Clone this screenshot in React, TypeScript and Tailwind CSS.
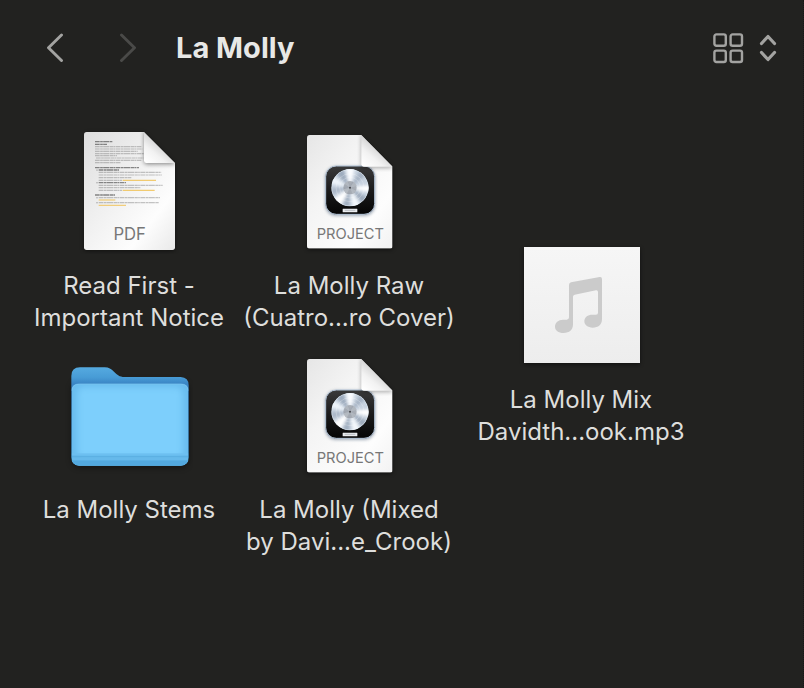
import type { ReactNode } from 'react';

interface FileItem {
  name: string[];
  icon: ReactNode;
}

// start offset, length and colour of each line of the document preview
const previewLines = [
  { x: 75, y: 65, w: 52, bold: true },
  { x: 75, y: 73, w: 36, bold: true },
  { x: 75, y: 80, w: 140 },
  { x: 75, y: 87, w: 142 },
  { x: 75, y: 94, w: 128 },
  { x: 75, y: 101, w: 146 },
  { x: 75, y: 107, w: 66 },
  { x: 78, y: 114, w: 142 },
  { x: 75, y: 121, w: 140 },
  { x: 75, y: 128, w: 78 },
  { x: 75, y: 143, w: 132, bold: true },
  { x: 86, y: 150, w: 62, bold: true },
  { x: 86, y: 157, w: 188 },
  { x: 86, y: 165, w: 190 },
  { x: 86, y: 173, w: 98 },
  { x: 86, y: 181, w: 70 },
  { x: 158, y: 181, w: 100, link: true },
  { x: 86, y: 188, w: 82, bold: true },
  { x: 86, y: 196, w: 192 },
  { x: 86, y: 203, w: 126 },
  { x: 86, y: 211, w: 70 },
  { x: 158, y: 211, w: 96, link: true },
  { x: 75, y: 225, w: 60, bold: true },
  { x: 86, y: 233, w: 184 },
  { x: 86, y: 240, w: 50, link: true },
  { x: 86, y: 248, w: 180 },
  { x: 86, y: 256, w: 82, link: true },
];

function PdfIcon() {
  return (
    <svg viewBox="-15 18 384 384" className="h-32 w-32" aria-hidden="true">
      <defs>
        <linearGradient id="pdf-page" x1="0" y1="0" x2="1" y2="1">
          <stop offset="0" stopColor="#dedede" />
          <stop offset="0.45" stopColor="#f1f1f1" />
          <stop offset="0.75" stopColor="#fdfdfd" />
          <stop offset="1" stopColor="#e9e9e9" />
        </linearGradient>
        <linearGradient id="pdf-fold" x1="0.1" y1="1" x2="0.6" y2="0.4">
          <stop offset="0" stopColor="#ffffff" />
          <stop offset="0.5" stopColor="#f2f2f2" />
          <stop offset="1" stopColor="#cfcfcf" />
        </linearGradient>
        <clipPath id="pdf-clip">
          <path d="M50 36H222L315 129V382Q315 390 307 390H50Q42 390 42 382V44Q42 36 50 36Z" />
        </clipPath>
        <filter id="pdf-blur" x="-30%" y="-30%" width="160%" height="160%">
          <feGaussianBlur stdDeviation="7" />
        </filter>
      </defs>
      <path d="M50 40H222L315 133V384Q315 393 307 393H50Q42 393 42 384Z" fill="#000" opacity="0.5" filter="url(#pdf-blur)" />
      <g clipPath="url(#pdf-clip)">
        <rect x="42" y="36" width="273" height="354" fill="url(#pdf-page)" />
        {previewLines.map((line) => (
          <line
            key={`${line.x}-${line.y}`}
            x1={line.x}
            x2={line.x + line.w}
            y1={line.y}
            y2={line.y}
            stroke={line.link ? '#f0bd45' : line.bold ? '#4c4c4c' : '#808080'}
            strokeWidth={line.bold ? 4 : 3.5}
            strokeDasharray={line.link ? undefined : '14 1.500 8 1 19 1.500 10 1 5 1.500'}
            opacity={line.link ? 0.75 : line.bold ? 0.65 : 0.45}
          />
        ))}
        <circle cx="81" cy="150" r="1.5" fill="#555" />
        <circle cx="81" cy="188" r="1.5" fill="#555" />
        <circle cx="81" cy="233" r="1.5" fill="#555" />
        <circle cx="81" cy="248" r="1.5" fill="#555" />
        <path d="M222 30V122Q222 133 233 133H318Z" fill="#000" opacity="0.45" filter="url(#pdf-blur)" />
        <path d="M222 36V122Q222 129 229 129H315Z" fill="url(#pdf-fold)" />
      </g>
      <text x="179" y="360" textAnchor="middle" fontSize="50" fill="#777777">PDF</text>
    </svg>
  );
}

const wedges = [
  { from: -8, to: 14, fill: '#ffffff' },
  { from: 30, to: 52, fill: '#9eabbc' },
  { from: 60, to: 82, fill: '#f4f8fc' },
  { from: 92, to: 112, fill: '#a3b0c1' },
  { from: 118, to: 146, fill: '#ffffff' },
  { from: 158, to: 180, fill: '#acb8c8' },
  { from: 192, to: 214, fill: '#eef4fa' },
  { from: 226, to: 250, fill: '#9eacbe' },
  { from: 258, to: 284, fill: '#fafcff' },
  { from: 300, to: 322, fill: '#a6b3c4' },
];

function wedgePath(from: number, to: number) {
  const point = (deg: number) => {
    const rad = (deg * Math.PI) / 180;
    return `${180 + 70 * Math.cos(rad)} ${203 + 70 * Math.sin(rad)}`;
  };
  return `M180 203L${point(from)}L${point(to)}Z`;
}

function ProjectIcon({ id }: { id: string }) {
  return (
    <svg viewBox="-15 18 384 384" className="h-32 w-32" aria-hidden="true">
      <defs>
        <linearGradient id={`${id}-page`} x1="0" y1="0" x2="1" y2="1">
          <stop offset="0" stopColor="#e6e6e6" />
          <stop offset="0.35" stopColor="#f4f4f4" />
          <stop offset="0.75" stopColor="#fdfdfd" />
          <stop offset="1" stopColor="#f2f2f2" />
        </linearGradient>
        <linearGradient id={`${id}-fold`} x1="0.1" y1="1" x2="0.6" y2="0.4">
          <stop offset="0" stopColor="#ffffff" />
          <stop offset="0.5" stopColor="#f2f2f2" />
          <stop offset="1" stopColor="#cfcfcf" />
        </linearGradient>
        <linearGradient id={`${id}-case`} x1="0" y1="0" x2="0" y2="1">
          <stop offset="0" stopColor="#3a3a3b" />
          <stop offset="0.5" stopColor="#1b1b1c" />
          <stop offset="1" stopColor="#050505" />
        </linearGradient>
        <clipPath id={`${id}-clip`}>
          <path d="M59 45H214L308 140V378Q308 386 300 386H59Q51 386 51 378V53Q51 45 59 45Z" />
        </clipPath>
        <clipPath id={`${id}-disc`}>
          <circle cx="180" cy="203" r="56" />
        </clipPath>
        <filter id={`${id}-blur`} x="-30%" y="-30%" width="160%" height="160%">
          <feGaussianBlur stdDeviation="7" />
        </filter>
        <filter id={`${id}-soft`} x="-30%" y="-30%" width="160%" height="160%">
          <feGaussianBlur stdDeviation="4" />
        </filter>
      </defs>
      <path d="M59 50H214L308 144V380Q308 389 300 389H59Q51 389 51 380Z" fill="#000" opacity="0.5" filter={`url(#${id}-blur)`} />
      <g clipPath={`url(#${id}-clip)`}>
        <rect x="51" y="45" width="257" height="341" fill={`url(#${id}-page)`} />
        <rect x="105" y="139" width="151" height="149" rx="34" fill="#6f7f93" opacity="0.6" filter={`url(#${id}-soft)`} />
        <rect x="107" y="138" width="147" height="145" rx="32" fill={`url(#${id}-case)`} stroke="#b4c5d8" strokeWidth="3" />
        <g clipPath={`url(#${id}-disc)`}>
          <circle cx="180" cy="203" r="56" fill="#c8d3e0" />
          <g filter={`url(#${id}-soft)`}>
            {wedges.map((wedge) => (
              <path key={wedge.from} d={wedgePath(wedge.from, wedge.to)} fill={wedge.fill} />
            ))}
          </g>
          <circle cx="180" cy="203" r="42" fill="none" stroke="#fff" strokeWidth="2" opacity="0.35" />
          <circle cx="180" cy="203" r="31" fill="none" stroke="#fff" strokeWidth="2" opacity="0.35" />
          <circle cx="180" cy="203" r="20" fill="#858b93" opacity="0.6" />
          <path d="M180 203L163 191L173 183ZM180 203L192 184L201 198ZM180 203L199 212L188 223ZM180 203L169 223L160 208Z" fill="#b9bfc6" opacity="0.7" />
          <circle cx="180" cy="203" r="3" fill="#44474b" />
          <circle cx="180" cy="203" r="55" fill="none" stroke="#e9f1f9" strokeWidth="2" opacity="0.8" />
        </g>
        <rect x="158" y="266" width="44" height="11" rx="1" fill="#e9ebee" />
        <path d="M164 271H196" stroke="#b9bdc3" strokeWidth="3" />
        <path d="M214 40V132Q214 144 225 144H311Z" fill="#000" opacity="0.32" filter={`url(#${id}-blur)`} />
        <path d="M214 45V133Q214 140 221 140H308Z" fill={`url(#${id}-fold)`} />
      </g>
      <text x="181" y="357" textAnchor="middle" fontSize="44" fill="#777777">PROJECT</text>
    </svg>
  );
}

function FolderIcon() {
  return (
    <svg viewBox="45 0 384 384" className="h-32 w-32" aria-hidden="true">
      <defs>
        <linearGradient id="folder-back" x1="0" y1="0" x2="0" y2="1">
          <stop offset="0" stopColor="#55aae0" />
          <stop offset="0.1" stopColor="#489cd6" />
          <stop offset="0.17" stopColor="#3a84c4" />
          <stop offset="1" stopColor="#4ba3dc" />
        </linearGradient>
        <filter id="folder-blur" x="-10%" y="-10%" width="120%" height="120%">
          <feGaussianBlur stdDeviation="10" />
        </filter>
        <clipPath id="folder-front">
          <path d="M88 101H392Q415 101 415 122V322Q415 347 392 347H88Q65 347 65 322V122Q65 101 88 101Z" />
        </clipPath>
      </defs>
      <rect x="66" y="95" width="349" height="256" rx="24" fill="#000" opacity="0.5" filter="url(#folder-blur)" />
      <path d="M64 78Q64 52 90 52H164C177 52 183 57 192 65C203 75 207 80 224 81H392Q416 82 416 106V322Q416 347 392 347H88Q64 347 64 322Z" fill="url(#folder-back)" />
      <g clipPath="url(#folder-front)">
        <rect x="64" y="100" width="352" height="248" fill="#69bcee" />
        <rect x="82" y="112" width="316" height="212" rx="18" fill="#7dcffc" filter="url(#folder-blur)" />
        <rect x="64" y="310" width="352" height="7" fill="#6dbff0" />
        <rect x="64" y="317" width="352" height="6" fill="#5cb0e3" />
        <rect x="64" y="323" width="352" height="8" fill="#66b9eb" />
        <rect x="64" y="331" width="352" height="17" fill="#53a9df" />
      </g>
      <path d="M66 122Q66 102 88 102H392Q414 102 414 122" fill="none" stroke="#80c7f2" strokeWidth="2" />
    </svg>
  );
}

function MusicIcon() {
  return (
    <svg viewBox="51 33 384 384" className="h-32 w-32" aria-hidden="true">
      <defs>
        <linearGradient id="music-bg" x1="0" y1="0" x2="0" y2="1">
          <stop offset="0" stopColor="#f6f6f6" />
          <stop offset="1" stopColor="#ededed" />
        </linearGradient>
        <filter id="music-blur" x="-10%" y="-10%" width="120%" height="120%">
          <feGaussianBlur stdDeviation="7" />
        </filter>
      </defs>
      <rect x="72" y="58" width="348" height="348" fill="#000" opacity="0.5" filter="url(#music-blur)" />
      <rect x="72" y="54" width="348" height="348" fill="url(#music-bg)" />
      <path
        d="M207 168Q207 162 213 160L299 144Q306 143 306 150V270C306 287 295 296 278 296C263 296 253 288 253 277C253 265 263 257 277 257H288Q294 257 294 251V189Q294 183 288 184L224 197Q219 198 219 203V286C219 303 208 312 191 312C175 312 165 304 165 293C165 281 175 272 189 272H200Q207 272 207 265Z"
        fill="#cbcbcb"
      />
    </svg>
  );
}

const columns: FileItem[][] = [
  [
    { name: ['Read First -', 'Important Notice'], icon: <PdfIcon /> },
    { name: ['La Molly Stems'], icon: <FolderIcon /> },
  ],
  [
    { name: ['La Molly Raw', '(Cuatro...ro Cover)'], icon: <ProjectIcon id="raw" /> },
    { name: ['La Molly (Mixed', 'by Davi...e_Crook)'], icon: <ProjectIcon id="mixed" /> },
  ],
  [{ name: ['La Molly Mix', 'Davidth...ook.mp3'], icon: <MusicIcon /> }],
];

function FileTile({ name, icon }: FileItem) {
  return (
    <li className="flex flex-col items-center gap-4">
      {icon}
      <p className="min-h-16 text-center text-2xl leading-8 whitespace-nowrap">
        {name.map((line) => (
          <span key={line} className="block">{line}</span>
        ))}
      </p>
    </li>
  );
}

export default function App() {
  return (
    <div className="min-h-screen border-r border-dotted border-[#171716] bg-[#222220] font-['Inter',sans-serif] text-[#dededc]">
      <header className="flex h-[95px] items-center justify-between pr-[26px] pl-[45px]">
        <div className="flex items-center">
          <button type="button" aria-label="Back" className="text-[#a3a3a1]">
            <svg width="20" height="30" viewBox="0 0 20 30" fill="none" stroke="currentColor" strokeWidth="2.9" strokeLinecap="round" strokeLinejoin="round">
              <path d="M16.5 2L3.500 14.700L16.5 27.500" />
            </svg>
          </button>
          <button type="button" aria-label="Forward" disabled className="ml-[53px] text-[#4a4a48]">
            <svg width="20" height="30" viewBox="0 0 20 30" fill="none" stroke="currentColor" strokeWidth="2.9" strokeLinecap="round" strokeLinejoin="round">
              <path d="M3.500 2L16.500 14.700L3.500 27.500" />
            </svg>
          </button>
          <h1 className="ml-[38px] text-[29px] font-bold text-[#e8e8e6]">La Molly</h1>
        </div>
        <button type="button" aria-label="Change view" className="flex items-center gap-[15px] text-[#a3a3a1]">
          <svg width="32" height="32" viewBox="0 0 32 32" fill="none" stroke="currentColor" strokeWidth="2.4">
            <rect x="2.4" y="2.4" width="11.4" height="11.4" rx="2" />
            <rect x="18.6" y="2.4" width="11.4" height="11.4" rx="2" />
            <rect x="2.4" y="18.6" width="11.4" height="11.4" rx="2" />
            <rect x="18.6" y="18.6" width="11.4" height="11.4" rx="2" />
          </svg>
          <svg width="18" height="28" viewBox="0 0 18 28" fill="none" stroke="currentColor" strokeWidth="3.2" strokeLinecap="round" strokeLinejoin="round">
            <path d="M2.5 9.5L9 2.5L15.5 9.5M2.5 18.5L9 25.5L15.5 18.5" />
          </svg>
        </button>
      </header>

      <main className="flex items-center pt-[31px] pl-[25px]">
        {columns.map((files, index) => (
          <ul
            key={files[0].name[0]}
            className={index === 2 ? 'mt-1 ml-6 w-52' : index === 1 ? 'ml-3 flex w-52 flex-col gap-4' : 'flex w-52 flex-col gap-4'}
          >
            {files.map((file) => (
              <FileTile key={file.name[0]} {...file} />
            ))}
          </ul>
        ))}
      </main>
    </div>
  );
}
